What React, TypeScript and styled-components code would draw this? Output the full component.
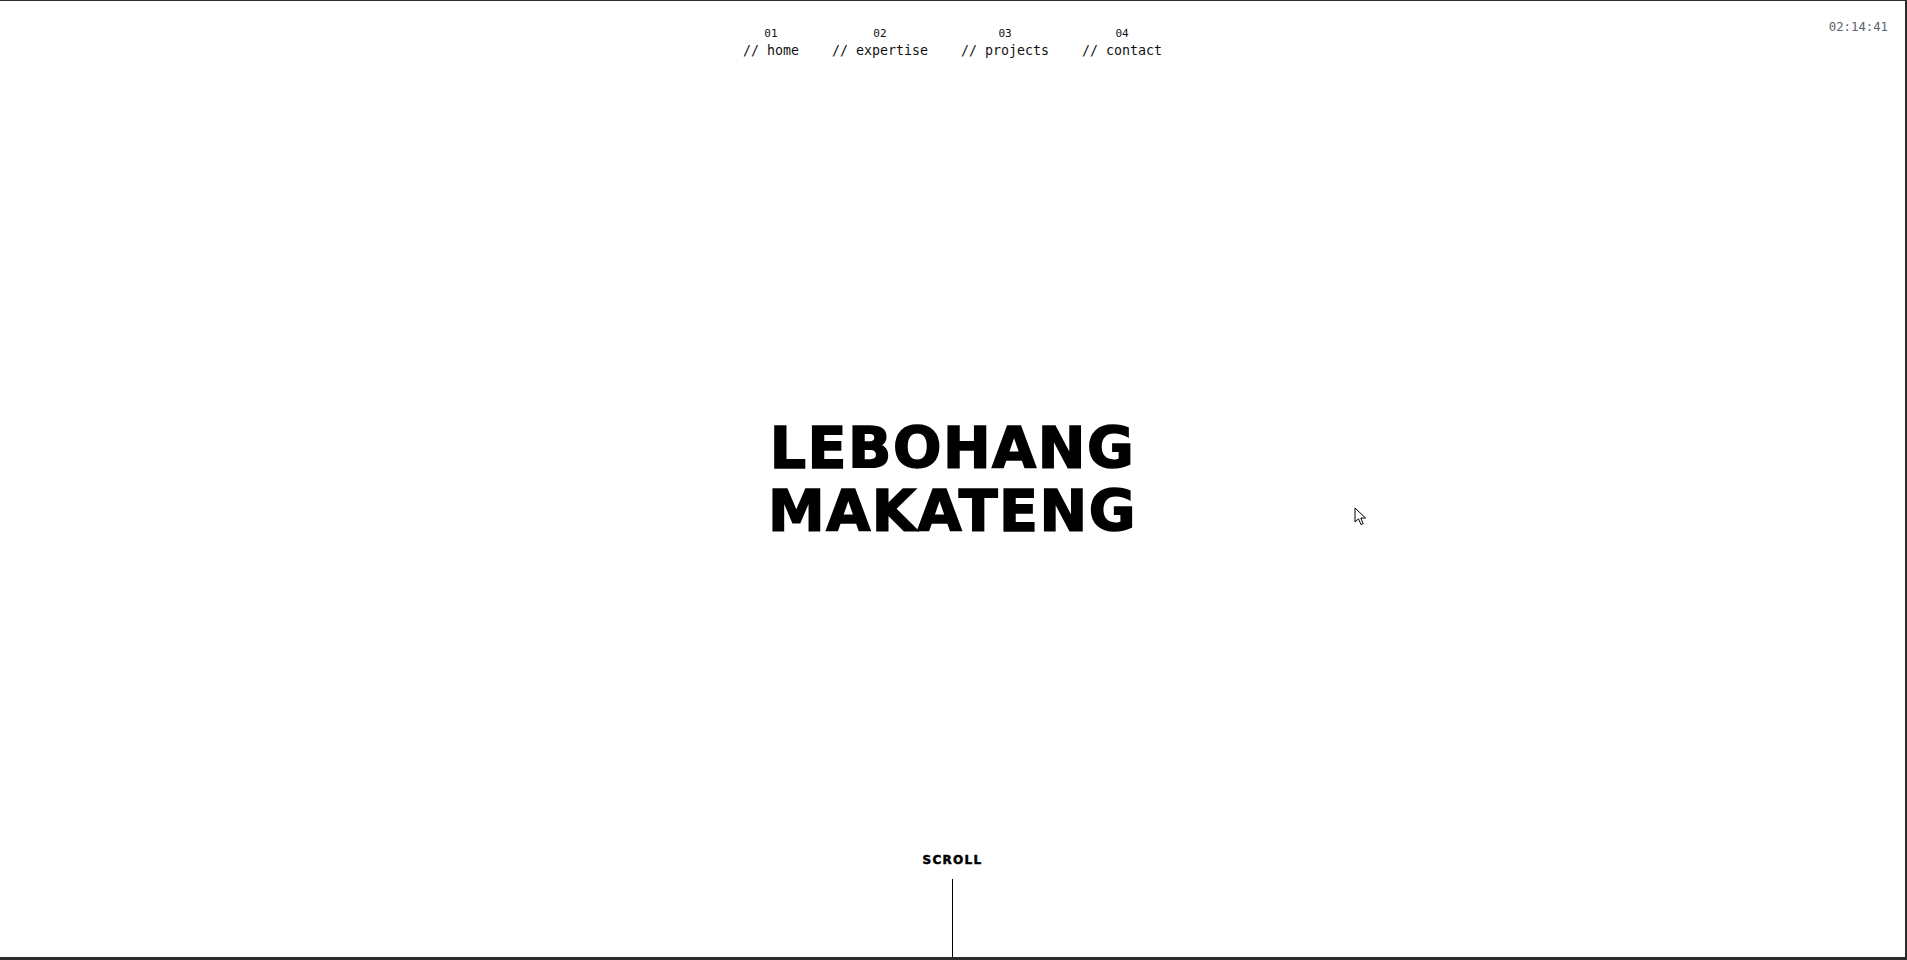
import * as React from 'react';
import styled, { createGlobalStyle } from 'styled-components';

const GlobalStyle = createGlobalStyle`
  html, body {
    margin: 0;
    padding: 0;
    background: #ffffff;
  }
  *, *::before, *::after {
    box-sizing: border-box;
  }
`;

const Page = styled.div`
  position: relative;
  height: 100vh;
  display: grid;
  grid-template-rows: 1fr auto 1fr;
  border-top: 1px solid #2b2b2b;
  border-right: 2px solid #2b2b2b;
  border-bottom: 3px solid #2b2b2b;
  background: #ffffff;
  overflow: hidden;
`;

const Header = styled.header`
  display: grid;
  grid-template-columns: 1fr auto 1fr;
  align-items: start;
  padding-top: 19px;
`;

const Nav = styled.nav`
  grid-column: 2;
  display: flex;
  gap: 33px;
  margin-top: 7px;
`;

const NavItem = styled.a`
  display: flex;
  flex-direction: column;
  align-items: center;
  gap: 3px;
  color: #111;
  text-decoration: none;
  font-family: 'DejaVu Sans Mono', 'Liberation Mono', monospace;
`;

const NavNumber = styled.span`
  font-size: 11px;
  line-height: 13px;
`;

const NavLabel = styled.span`
  font-size: 13.3px;
  line-height: 16px;
  white-space: pre;
`;

const Clock = styled.div`
  grid-column: 3;
  justify-self: end;
  margin-right: 17px;
  font-family: 'DejaVu Sans Mono', 'Liberation Mono', monospace;
  font-size: 12.3px;
  line-height: 14px;
  color: #5b6270;
`;

const Hero = styled.main`
  display: flex;
  justify-content: center;
  align-items: center;
  padding-top: 2px;
`;

const Title = styled.h1`
  margin: 0;
  font-family: 'DejaVu Sans', 'Liberation Sans', sans-serif;
  font-weight: 900;
  font-size: 57px;
  line-height: 63px;
  letter-spacing: 1.5px;
  text-align: center;
  color: #000;
  -webkit-text-stroke: 1.6px #000;
`;

const Footer = styled.footer`
  align-self: end;
  display: flex;
  flex-direction: column;
  align-items: center;
  gap: 12px;
`;

const ScrollLabel = styled.span`
  font-family: 'DejaVu Sans', 'Liberation Sans', sans-serif;
  font-weight: 700;
  font-size: 12px;
  line-height: 14px;
  letter-spacing: 1.3px;
  color: #000;
  -webkit-text-stroke: 0.5px #000;
`;

const ScrollLine = styled.span`
  width: 1px;
  height: 78px;
  background: #000;
`;

const Pointer = styled.svg`
  position: absolute;
  left: 1354px;
  top: 506px;
  pointer-events: none;
`;

const links = [
  { num: '01', label: 'home' },
  { num: '02', label: 'expertise' },
  { num: '03', label: 'projects' },
  { num: '04', label: 'contact' },
];

export default function App() {
  return (
    <>
      <GlobalStyle />
      <Page>
        <Header>
          <Nav>
            {links.map((l) => (
              <NavItem key={l.num} href="#">
                <NavNumber>{l.num}</NavNumber>
                <NavLabel>{`// ${l.label}`}</NavLabel>
              </NavItem>
            ))}
          </Nav>
          <Clock>02:14:41</Clock>
        </Header>

        <Hero>
          <Title>
            LEBOHANG
            <br />
            MAKATENG
          </Title>
        </Hero>

        <Footer>
          <ScrollLabel>SCROLL</ScrollLabel>
          <ScrollLine />
        </Footer>

        <Pointer width="14" height="20" viewBox="0 0 14 20">
          <path
            d="M1 1 L1 15 L4.5 11.8 L7 17.5 L9.2 16.6 L6.8 11 L11.5 11 Z"
            fill="#fff"
            stroke="#000"
            strokeWidth="1"
            strokeLinejoin="round"
          />
        </Pointer>
      </Page>
    </>
  );
}
